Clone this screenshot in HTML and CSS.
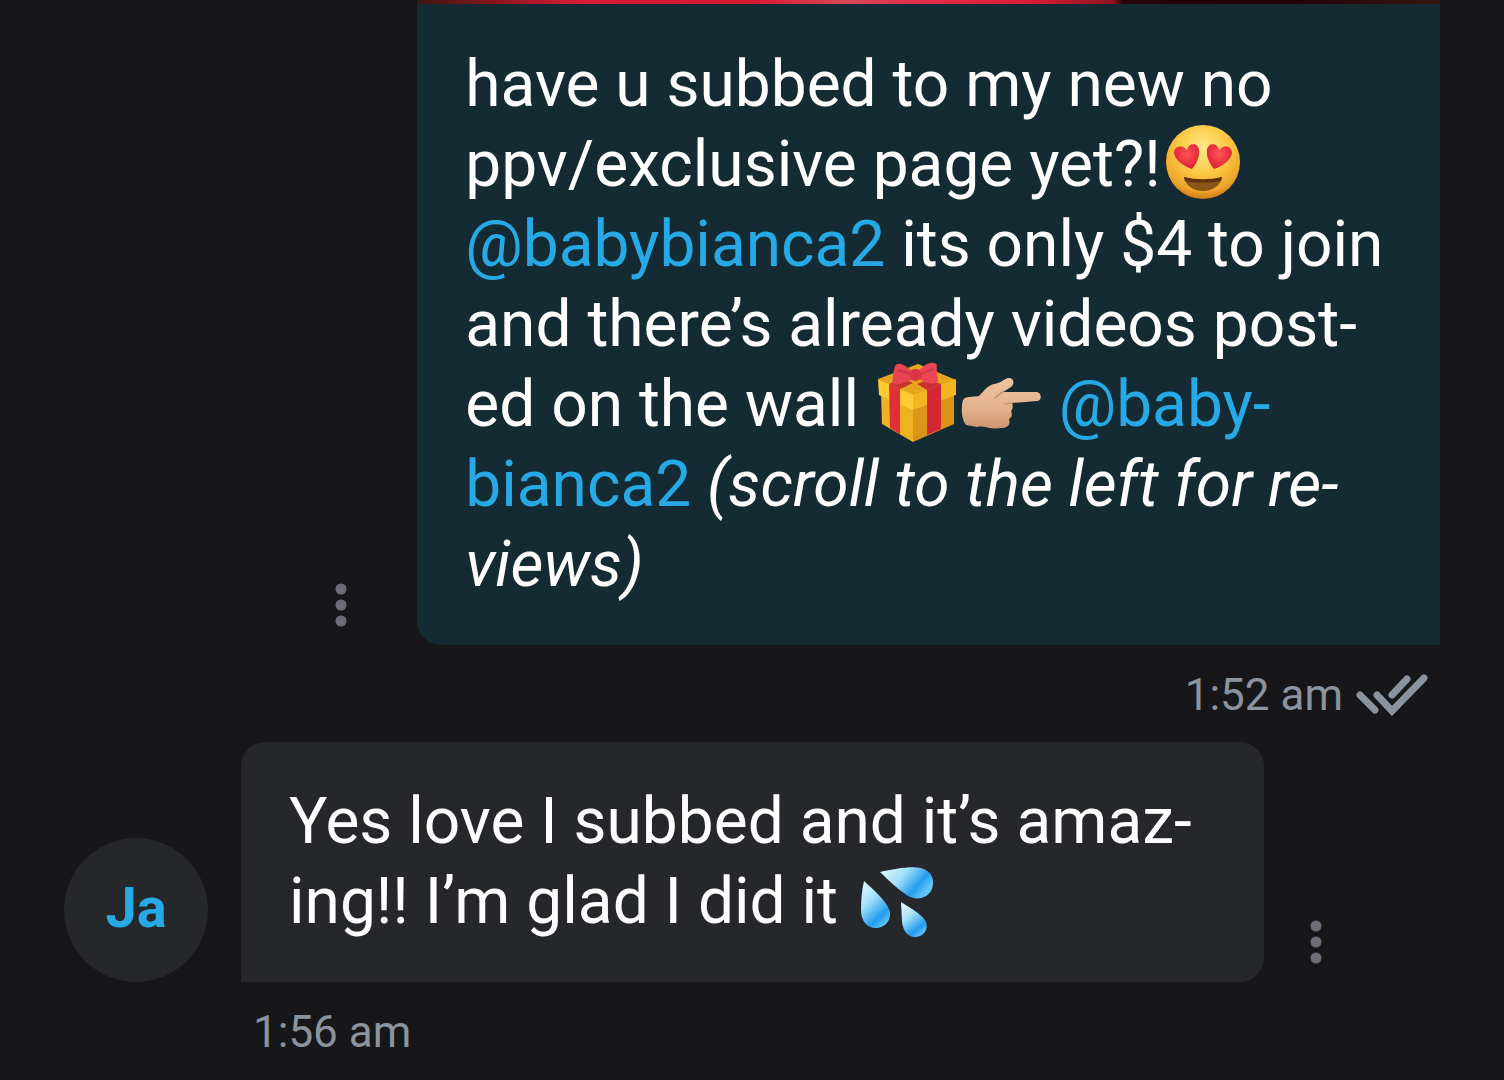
FILE: index.html
```html
<!DOCTYPE html>
<html lang="en">
<head>
    <meta charset="UTF-8">
    <meta name="viewport" content="width=device-width, initial-scale=1.0">
    <title>Messages</title>
    <link rel="stylesheet" href="styles.css">
</head>
<body>
<main class="chat">
    <div class="message sent">
        <div class="message-row">
            <button type="button" class="menu-btn" aria-label="Message options">
                <svg viewBox="0 0 12 44"><circle cx="6" cy="6" r="5.5"/><circle cx="6" cy="22" r="5.5"/><circle cx="6" cy="38" r="5.5"/></svg>
            </button>
            <div class="bubble">
                <div class="photo"></div>
                <p class="text">have u subbed to my new no ppv/exclusive page yet?!<svg class="emoji" viewBox="0 0 80 80" role="img" aria-label="heart eyes">
                    <defs>
                        <radialGradient id="face" cx="50%" cy="32%" r="68%">
                            <stop offset="0" stop-color="#ffe889"/>
                            <stop offset="0.5" stop-color="#fbc944"/>
                            <stop offset="0.85" stop-color="#eda52b"/>
                            <stop offset="1" stop-color="#cf7c18"/>
                        </radialGradient>
                        <radialGradient id="heart" cx="50%" cy="40%" r="60%">
                            <stop offset="0" stop-color="#ff5558"/>
                            <stop offset="1" stop-color="#dc2032"/>
                        </radialGradient>
                    </defs>
                    <circle cx="40" cy="40" r="37" fill="url(#face)"/>
                    <path d="M29 47C20 44 12 38 11 31C11 24 19 22 24 28C26 20 35 21 36 28C37 35 33 42 29 47Z" fill="url(#heart)"/>
                    <path d="M51 47C47 42 43 35 44 28C45 21 54 20 56 28C61 22 69 24 69 31C68 38 60 44 51 47Z" fill="url(#heart)"/>
                    <path d="M21 55C33 59 47 59 59 55C58 63 50 69 40 69C30 69 22 63 21 55Z" fill="#8a531a"/>
                    <path d="M21 55C33 58 47 58 59 55L58 59C47 61 33 61 22 59Z" fill="#653207"/>
                </svg>
                <a href="#">@babybianca2</a> its only $4 to join and there’s already videos post&shy;ed on the wall <svg class="emoji" viewBox="0 0 80 80" role="img" aria-label="gift">
                    <path d="M4 32L36 47V80L5 62Z" fill="#eeb323"/>
                    <path d="M36 47L77 32V62L36 80Z" fill="#dc941b"/>
                    <path d="M1 17L41 2L79 18L36 35Z" fill="#e7a51d"/>
                    <path d="M1 17L36 33V48L2 33Z" fill="#ffca32"/>
                    <path d="M36 33L79 17V33L36 48Z" fill="#f4b522"/>
                    <path d="M12 22L23 27V72L13 66Z" fill="#e02f38"/>
                    <path d="M50 28L64 22V67L50 73Z" fill="#d52834"/>
                    <path d="M12 22L26 17L36 21L23 27Z" fill="#c9302f"/>
                    <path d="M40 22L50 18L64 22L50 28Z" fill="#c9302f"/>
                    <path d="M35 9C28 3 21 -1 18 4C16 9 16 16 15 21C20 25 29 20 36 17Z" fill="#e84452"/>
                    <path d="M41 9C48 2 56 -2 60 3C59 8 61 14 61 20C54 24 47 20 41 16Z" fill="#ea4655"/>
                    <path d="M21 8L34 12M57 7L43 12" stroke="#d23a47" stroke-width="2" fill="none"/>
                    <rect x="33" y="7" width="11" height="12" rx="5" fill="#d93645"/>
                </svg><svg class="emoji" viewBox="0 0 80 80" role="img" aria-label="pointing right">
                    <defs>
                        <linearGradient id="hand" x1="0" y1="0" x2="0" y2="1">
                            <stop offset="0" stop-color="#eec39e"/>
                            <stop offset="0.6" stop-color="#e3b28d"/>
                            <stop offset="1" stop-color="#cf9570"/>
                        </linearGradient>
                    </defs>
                    <path d="M2 38C4 34 12 35 18 34C24 28 26 24 33 22C40 21 43 17 47 16C53 15 54 22 50 25L42 30L76 30C81 31 81 39 76 39L51 41C52 44 52 47 50 49C52 53 50 56 48 57C50 63 46 66 40 66C29 68 23 63 16 65L5 63C0 57 0 44 2 38Z" fill="url(#hand)"/>
                    <path d="M43 29C39 32 36 33 34 36M51 41L44 42" fill="none" stroke="#c48f6b" stroke-width="1.5" stroke-linecap="round"/>
                </svg> <a href="#">@baby&shy;bianca2</a> <em>(scroll to the left for re&shy;views)</em></p>
            </div>
        </div>
        <div class="meta">
            <time>1:52 am</time>
            <svg class="ticks" viewBox="0 0 72 42" role="img" aria-label="Read"><path d="M4 21L19 36M21 21L36 37L68 4M36 21L51 5"/></svg>
        </div>
    </div>

    <div class="message received">
        <div class="message-row">
            <div class="avatar">Ja</div>
            <div class="bubble">
                <p class="text">Yes love I subbed and it’s amaz&shy;ing!! I’m glad I did it <svg class="emoji" viewBox="0 0 80 80" role="img" aria-label="sweat drops">
                    <defs>
                        <linearGradient id="drop" x1="0.1" y1="0" x2="0.7" y2="1">
                            <stop offset="0" stop-color="#e4fbff"/>
                            <stop offset="0.4" stop-color="#a3e0fa"/>
                            <stop offset="0.8" stop-color="#229ded"/>
                            <stop offset="1" stop-color="#62c5f6"/>
                        </linearGradient>
                        <linearGradient id="drop-side" x1="0" y1="0" x2="1" y2="0.5">
                            <stop offset="0" stop-color="#e4fbff"/>
                            <stop offset="0.45" stop-color="#a3e0fa"/>
                            <stop offset="0.8" stop-color="#229ded"/>
                            <stop offset="1" stop-color="#62c5f6"/>
                        </linearGradient>
                    </defs>
                    <path d="M24 13C38 10 54 7 65 9C76 12 79 21 76 30C72 39 61 42 52 37C43 31 33 22 24 13Z" fill="url(#drop-side)"/>
                    <path d="M8 22C17 30 29 41 33 50C37 60 29 69 20 69C10 69 5 61 5 51C5 40 6 31 8 22Z" fill="url(#drop)"/>
                    <path d="M45 43C54 49 66 55 70 63C73 71 67 78 59 78C51 78 47 71 46 63Z" fill="url(#drop)"/>
                </svg></p>
            </div>
            <button type="button" class="menu-btn" aria-label="Message options">
                <svg viewBox="0 0 12 44"><circle cx="6" cy="6" r="5.5"/><circle cx="6" cy="22" r="5.5"/><circle cx="6" cy="38" r="5.5"/></svg>
            </button>
        </div>
        <div class="meta">
            <time>1:56 am</time>
        </div>
    </div>
</main>
</body>
</html>
```

FILE: styles.css
```css
* {
    margin: 0;
    padding: 0;
    box-sizing: border-box;
}

body {
    background: #171719;
    color: #fefefe;
    font-family: Roboto, sans-serif;
}

.chat {
    padding: 0 64px;
}

.message-row {
    display: flex;
    align-items: flex-end;
}

.sent .message-row {
    justify-content: flex-end;
}

.bubble {
    width: 68vw;
    overflow: hidden;
}

.sent .bubble {
    background: #142b33;
    border-radius: 0 0 0 24px;
}

.received .bubble {
    background: #26272b;
    border-radius: 24px 24px 24px 0;
}

/* bottom edge of the attached photo */
.photo {
    height: 4px;
    margin-bottom: 1px;
    background: linear-gradient(to right, #3c1710 0, #8f1420 8%, #d81e35 16%, #d9152c 32%, #d94756 42%, #e02c47 50%, #d81e32 60%, #8f1420 68%, #260508 69%, #200405 85%, #341910 100%);
}

.text {
    padding: 40px 48px;
    font-size: 64px;
    line-height: 80px;
}

.text a {
    color: #27a9e6;
    text-decoration: none;
}

.emoji {
    width: 80px;
    height: 80px;
    margin: -8px 2px;
    vertical-align: -8px;
    overflow: visible;
}

.menu-btn {
    width: 56px;
    height: 44px;
    margin-bottom: 18px;
    background: none;
    border: none;
    cursor: pointer;
}

.menu-btn svg {
    display: block;
    width: 12px;
    height: 44px;
    margin: 0 auto;
    fill: #6c6d75;
}

.sent .menu-btn {
    margin-right: 48px;
}

.received .menu-btn {
    margin-left: 24px;
}

.avatar {
    width: 144px;
    height: 144px;
    margin-right: 33px;
    border-radius: 50%;
    background: #26272b;
    color: #27a9e6;
    font-size: 56px;
    font-weight: bold;
    line-height: 140px;
    text-align: center;
}

.meta {
    display: flex;
    align-items: center;
    padding: 18px 12px 15px;
    color: #8b939e;
    font-size: 44px;
    line-height: 64px;
}

.sent .meta {
    justify-content: flex-end;
    gap: 13px;
}

.received .meta {
    padding-left: 189px;
}

.ticks {
    width: 72px;
    height: 42px;
    fill: none;
    stroke: #8b939e;
    stroke-width: 7;
    stroke-linecap: round;
}
```
